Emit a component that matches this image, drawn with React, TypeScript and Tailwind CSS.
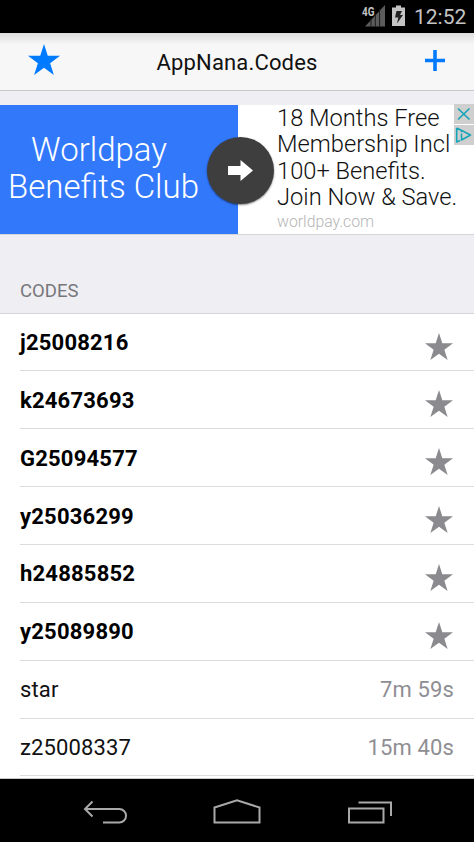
type Code = {
    name: string
    time?: string
}

const codes: Code[] = [
    { name: "j25008216" },
    { name: "k24673693" },
    { name: "G25094577" },
    { name: "y25036299" },
    { name: "h24885852" },
    { name: "y25089890" },
    { name: "star", time: "7m 59s" },
    { name: "z25008337", time: "15m 40s" },
]

function Star({ className }: { className: string }) {
    return (
        <svg viewBox="0 0 100 95" preserveAspectRatio="none" fill="currentColor" className={className}>
            <path d="M50 0 L61.8 36.3 H100 L69.1 58.8 L80.9 95 L50 72.6 L19.1 95 L30.9 58.8 L0 36.3 H38.2 Z" />
        </svg>
    )
}

function StatusBar() {
    return (
        <div className="flex h-[33px] shrink-0 justify-end bg-black text-[#c4c4c4]">
            <svg width="70" height="33" viewBox="0 0 70 33" className="shrink-0">
                <path d="M45 5 V26.5 H25 Z" fill="#5c5c5c" />
                <path d="M31 18 V27 M35.3 14 V27 M39.6 9 V27" stroke="#1c1c1c" strokeWidth="1" />
                <text x="22" y="16" fontSize="12.5" fontWeight="700" textLength="12.5" lengthAdjust="spacingAndGlyphs" fill="#c4c4c4" fontFamily="Roboto, sans-serif">4G</text>
                <path d="M52 7.5 H56 V5.5 H61 V7.5 H65 V26 H52 Z" fill="#c4c4c4" />
                <path d="M56.5 11 H62 L60 15 H63 L57 23.5 L58.3 17.5 H55 Z" fill="#222" />
            </svg>
            <span className="mr-[9px] ml-[4px] w-[51px] text-[21px] leading-[34px]">12:52</span>
        </div>
    )
}

function Header() {
    return (
        <div className="flex h-[58px] shrink-0 items-center justify-between border-b border-[#c8c8cc] bg-linear-to-b from-[#dedede] via-[#f7f7f7] via-20% to-[#f7f7f7] pr-[29px] pl-[28px]">
            <Star className="mb-[5px] h-[31px] w-[32px] text-[#007aff]" />
            <h1 className="mt-px mr-[11px] text-[22px] tracking-[0.16px] text-[#111]">AppNana.Codes</h1>
            <svg width="20" height="21" viewBox="0 0 20 21" className="mb-[2px]">
                <path d="M0 10.5 H20 M10 0 V21" stroke="#007aff" strokeWidth="3.6" />
            </svg>
        </div>
    )
}

function Banner() {
    return (
        <div className="relative mt-[14px] flex h-[129px] shrink-0 bg-white">
            <div className="flex w-[238px] flex-col items-center justify-center bg-[#3278fb] pr-[31px] pb-[3px] text-[33px] leading-[37px] font-light text-white">
                <span className="mr-[9px] whitespace-nowrap">Worldpay</span>
                <span className="whitespace-nowrap">Benefits Club</span>
            </div>
            <div className="pl-[39px] text-[23.7px] leading-[26.4px] font-light whitespace-nowrap text-[#111]">
                <p>18 Months Free</p>
                <p>Membership Incl</p>
                <p>100+ Benefits.</p>
                <p>Join Now &amp; Save.</p>
                <p className="text-[15.8px] leading-[21px] text-[#b5b5b5]">worldpay.com</p>
            </div>
            <div className="absolute top-[32px] left-[207px] flex size-[67px] items-center justify-center rounded-full bg-[#3e3e3e] shadow-[0_1px_2px_rgba(0,0,0,0.5)]">
                <svg width="25" height="21" viewBox="0 0 25 21">
                    <path d="M0 6 H12.5 V0 L25 10.5 L12.5 21 V15 H0 Z" fill="#fff" />
                </svg>
            </div>
            <div className="absolute -top-px right-0 flex flex-col gap-px">
                <svg width="20" height="20" viewBox="0 0 20 20" className="bg-[#cfcfcf]">
                    <path d="M4 4.5 L15.5 15.5 M15.5 4.5 L4 15.5" stroke="#16a5b8" strokeWidth="1.7" />
                </svg>
                <svg width="20" height="20" viewBox="0 0 20 20" fill="none" stroke="#16a5b8" className="bg-[#cfcfcf]">
                    <path d="M2.7 3 V17 L6 15.5 M2.7 3 L16.5 10 L7.5 15 V8.5" strokeWidth="1.6" strokeLinejoin="round" />
                    <path d="M7.5 5.8 V7.2" strokeWidth="1.6" />
                </svg>
            </div>
        </div>
    )
}

function Row({ code }: { code: Code }) {
    return (
        <li className="ml-[20px] flex h-[57.86px] shrink-0 items-center justify-between border-b border-[#dcdcde] pt-px text-[22px] first:h-[57.4px]">
            {code.time ? (
                <>
                    <span className="tracking-[0.12px] text-[#111]">{code.name}</span>
                    <span className="mr-[20px] tracking-[0.12px] text-[#8e8e93]">{code.time}</span>
                </>
            ) : (
                <>
                    <span className="font-bold tracking-[0.2px] text-black">{code.name}</span>
                    <Star className="mt-[7px] mr-[21px] h-[27px] w-[28px] text-[#8b8b8f]" />
                </>
            )}
        </li>
    )
}

function NavBar() {
    return (
        <div className="flex h-[63px] shrink-0 items-start bg-black pt-[20px] pl-[83px]">
            <svg width="310" height="28" viewBox="83 0 310 28" fill="none" stroke="#a9a9a9" strokeWidth="2">
                <path d="M92.5 2.5 L85 10 L92.5 17.5 M85 10 H119.3 A6.75 6.75 0 0 1 119.3 23.5 H103" />
                <path d="M214.5 23.5 V8.5 L237 1.2 L259.5 8.5 V23.5 Z" />
                <path d="M349 9.5 H383.5 V23.5 H349 Z M358.5 3.5 H391 V17" />
            </svg>
        </div>
    )
}

export default function App() {
    return (
        <div className="flex h-[842px] w-[474px] flex-col overflow-hidden bg-[#efeef3] font-['Roboto',sans-serif]">
            <StatusBar />
            <Header />
            <Banner />
            <h2 className="h-[80px] shrink-0 border-t border-b border-[#d6d6da] pt-[43px] pl-[20px] text-[18.5px] leading-[27px] text-[#77777b]">CODES</h2>
            <ul className="flex h-[465px] shrink-0 flex-col overflow-hidden border-b border-[#c8c8cc] bg-white">
                {codes.map((code) => (
                    <Row key={code.name} code={code} />
                ))}
            </ul>
            <NavBar />
        </div>
    )
}
